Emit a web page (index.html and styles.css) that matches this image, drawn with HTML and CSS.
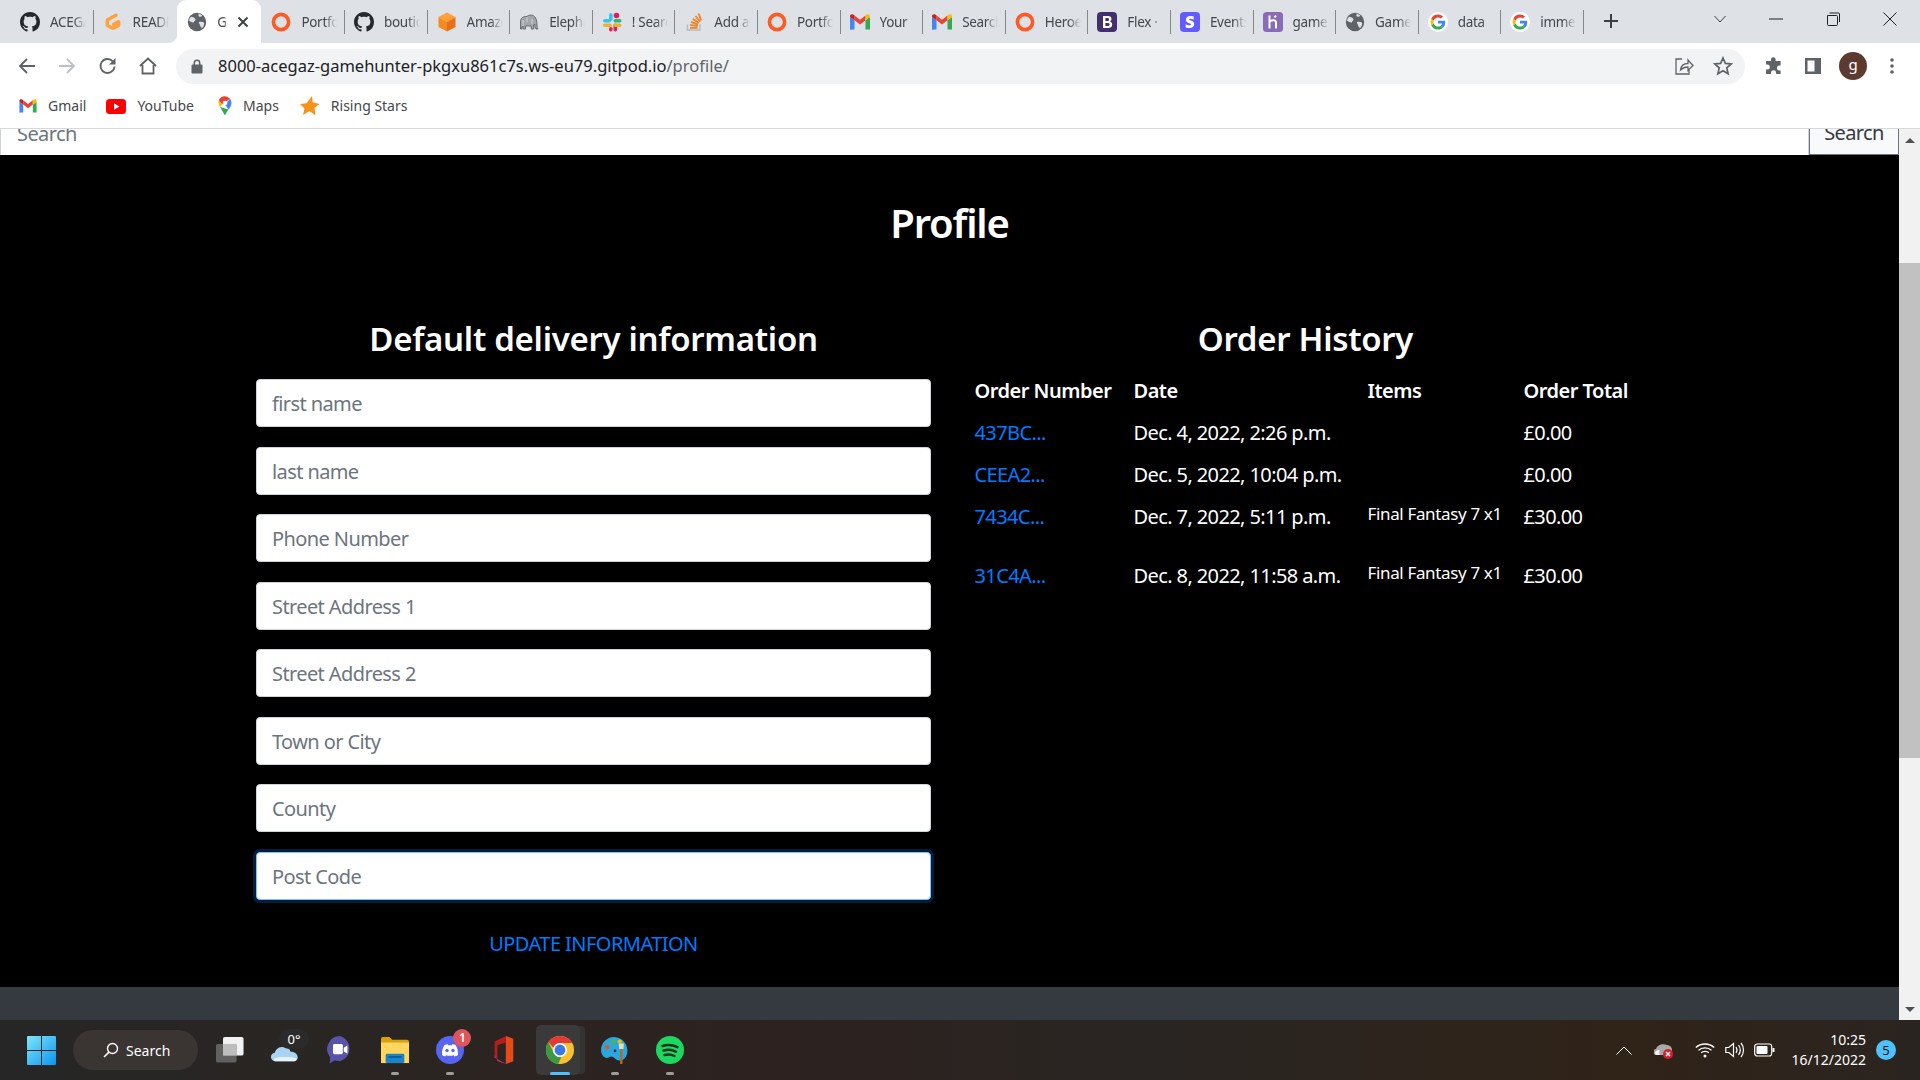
FILE: index.html
```html
<!DOCTYPE html>
<html lang="en">
<head>
    <meta charset="UTF-8">
    <meta name="viewport" content="width=device-width, initial-scale=1.0">
    <title>Profile</title>
    <link rel="stylesheet" href="styles.css">
</head>
<body>

    <!-- shared icons -->
    <svg class="icon-defs" width="0" height="0">
        <symbol id="i-github" viewBox="0 0 16 16"><path fill="#24292e" d="M8 0C3.58 0 0 3.58 0 8c0 3.54 2.29 6.53 5.47 7.59.4.07.55-.17.55-.38 0-.19-.01-.82-.01-1.49-2.01.37-2.53-.49-2.69-.94-.09-.23-.48-.94-.82-1.13-.28-.15-.68-.52-.01-.53.63-.01 1.08.58 1.23.82.72 1.21 1.87.87 2.33.66.07-.52.28-.87.51-1.07-1.78-.2-3.64-.89-3.64-3.95 0-.87.31-1.59.82-2.15-.08-.2-.36-1.02.08-2.12 0 0 .67-.21 2.2.82.64-.18 1.32-.27 2-.27.68 0 1.36.09 2 .27 1.53-1.04 2.2-.82 2.2-.82.44 1.1.16 1.92.08 2.12.51.56.82 1.27.82 2.15 0 3.07-1.87 3.75-3.65 3.95.29.25.54.73.54 1.48 0 1.07-.01 1.93-.01 2.2 0 .21.15.46.55.38A8.013 8.013 0 0016 8c0-4.42-3.58-8-8-8z"/></symbol>
        <symbol id="i-gitpod" viewBox="0 0 20 20"><path fill="none" stroke="#ffa23e" stroke-width="3.4" stroke-linecap="round" stroke-linejoin="round" d="M13 3.2 5 7.6a1.6 1.6 0 0 0-.8 1.4v3.4c0 .6.3 1.1.8 1.4l4.2 2.3c.5.3 1 .3 1.5 0l4.2-2.3c.5-.3.8-.8.8-1.4V9.6L10.5 12.4"/></symbol>
        <symbol id="i-globe" viewBox="0 0 20 20"><circle cx="10" cy="10" r="9.2" fill="#5f6368"/><path fill="#dee1e6" d="M4 4.8c1.6.2 3 .7 4 1.7.9.9.5 1.8-.4 2.4-.8.5-.5 1.5-1.4 1.6C5 10.600 3 9.500 1.800 8.500 2.200 7 3 5.800 4 4.800zM11.500 1.800c1.500.3 2.800 1 3.900 2-.7.900-1.700.900-2.600.900-1 0-1.500-.500-1.300-1.400zM12 10c1.500-.500 3.500-.300 5 .5.400 2-.4 4-1.800 5.500-1.500-.300-1.800-1.700-2.200-3-.3-1-1.600-2.300-1-3z"/></symbol>
        <symbol id="i-ring" viewBox="0 0 20 20"><circle cx="10" cy="10" r="7.600" fill="none" stroke="#ff5a24" stroke-width="3.600"/></symbol>
        <symbol id="i-cube" viewBox="0 0 20 20"><path fill="#ffa033" d="M10 .5 18.500 5 10 10 1.500 5z"/><path fill="#f58a1f" d="M1.500 5 10 10v9.500L1.500 15z"/><path fill="#e8701a" d="M18.500 5 10 10v9.500l8.500-4.500z"/></symbol>
        <symbol id="i-elephant" viewBox="0 0 20 20"><path fill="#a4a7aa" stroke="#55585c" stroke-width=".8" d="M1.500 17V9.500C1.500 6 4.500 4 8 4.500c1.500-1.800 5.500-2 7.500 0 1.800 1.700 2.500 5 2.500 8.500 0 1.500.2 3 .8 4h-1.800c-.8-1-1.200-3-1.300-5l-1 1v4h-2.500v-3H6.500v3H4v-3l-1 1v2z"/><path fill="none" stroke="#f1f3f4" stroke-width=".6" d="M8 5v5M4 8v6M13 7v5"/></symbol>
        <symbol id="i-slack" viewBox="0 0 20 20"><rect x="7" y="1" width="3.600" height="8" rx="1.800" fill="#36c5f0"/><rect x="1" y="7" width="8" height="3.600" rx="1.800" fill="#36c5f0"/><circle cx="14.500" cy="3.500" r="2.800" fill="#e01e5a"/><rect x="11.500" y="7" width="8" height="3.600" rx="1.800" fill="#2eb67d"/><rect x="11.500" y="11.500" width="3.600" height="8" rx="1.800" fill="#e01e5a"/><rect x="1" y="11.500" width="9" height="3.600" rx="1.800" fill="#ecb22e"/><rect x="11.500" y="11.500" width="8" height="3.600" rx="1.800" fill="#ecb22e"/><rect x="7" y="15" width="3.600" height="4.500" rx="1.800" fill="#e01e5a"/></symbol>
        <symbol id="i-stack" viewBox="0 0 20 20"><path fill="none" stroke="#bcbbbb" stroke-width="1.600" d="M3.500 12.500v5.500h12.500v-5.500"/><path fill="none" stroke="#f48024" stroke-width="1.800" d="M6 15.800h7.500M6.200 12.800l7.400 1.300M7 9.800l7 2.900M8.800 6.800l6 4.300M11.500 4l4.600 5.700M14.500 1.500l2.800 6.800"/></symbol>
        <symbol id="i-gmail" viewBox="0 0 20 16"><path fill="#4285f4" d="M0 15.500V3l4.500 3.300v9.200H1.400A1.400 1.400 0 0 1 0 15.500z"/><path fill="#34a853" d="M15.500 15.500V6.300L20 3v12.500h-4.500z"/><path fill="#ea4335" d="M4.500 6.300V1.500L10 5.700l5.500-4.200v4.800L10 10.500z"/><path fill="#c5221f" d="M0 3V2.200C0 .4 2-.4 3.300.6L4.500 1.500v4.800z"/><path fill="#fbbc04" d="M20 3V2.200C20 .4 18-.4 16.700.6l-1.200.9v4.800z"/></symbol>
        <symbol id="i-bootstrap" viewBox="0 0 20 20"><rect width="20" height="20" rx="4" fill="#41306b"/><path fill="#fff" d="M6 4h5c2.200 0 3.500 1.200 3.500 3 0 1.200-.7 2.200-1.800 2.500v.1c1.500.2 2.500 1.300 2.500 2.800 0 2.200-1.600 3.600-4.200 3.600H6zm2.400 2v3h1.900c1.200 0 1.800-.5 1.800-1.500S11.500 6 10.400 6zm0 5v3h2.200c1.300 0 2-.5 2-1.500s-.7-1.500-2.100-1.500z"/></symbol>
        <symbol id="i-stripe" viewBox="0 0 20 20"><rect width="20" height="20" rx="4" fill="#635bff"/><path fill="#fff" d="M9.200 7.600c0-.6.500-.8 1.200-.8 1 0 2.300.3 3.300.9V4.600a8.700 8.700 0 0 0-3.300-.6C7.700 4 5.900 5.400 5.900 7.800c0 3.700 5 3.100 5 4.700 0 .7-.6.900-1.400.9-1.200 0-2.700-.5-3.900-1.200v3.100c1.300.6 2.600.8 3.900.8 2.800 0 4.700-1.400 4.700-3.800 0-4-5-3.300-5-4.700z"/></symbol>
        <symbol id="i-heroku" viewBox="0 0 20 20"><rect width="20" height="20" rx="3.500" fill="#8a6cb6"/><path fill="none" stroke="#fff" stroke-width="2" d="M6.500 3.500v13M6.500 9.500c2-1.200 6-2 6.500.5v6.500M13 3.500l-1.500 2"/></symbol>
        <symbol id="i-google" viewBox="0 0 20 20"><circle cx="10" cy="10" r="10" fill="#fff"/><path fill="#4285f4" d="M17.200 10.200c0-.6 0-1-.1-1.500H10v2.900h4.100a3.500 3.500 0 0 1-1.500 2.300l2.300 1.800c1.400-1.300 2.300-3.200 2.300-5.500z"/><path fill="#34a853" d="M10 17.500c2 0 3.700-.7 4.900-1.800l-2.300-1.800c-.7.400-1.500.7-2.600.7-2 0-3.700-1.300-4.300-3.200l-2.400 1.800a7.400 7.400 0 0 0 6.700 4.300z"/><path fill="#fbbc05" d="M5.700 11.400a4.500 4.500 0 0 1 0-2.900L3.300 6.700a7.400 7.400 0 0 0 0 6.600z"/><path fill="#ea4335" d="M10 5.400c1.100 0 2.100.4 2.900 1.100l2.100-2.100A7.200 7.200 0 0 0 10 2.500a7.400 7.400 0 0 0-6.700 4.200l2.400 1.800C6.300 6.700 8 5.400 10 5.400z"/></symbol>
        <symbol id="i-close" viewBox="0 0 12 12"><path stroke="#3c4043" stroke-width="1.900" d="M1.500 1.500l9 9M10.500 1.500l-9 9"/></symbol>
    </svg>

    <div class="browser">
        <div class="tabstrip">
            <div class="tab"><svg class="favicon"><use href="#i-github"/></svg><span class="tab-label">ACEGAZ</span></div>
            <div class="tab no-sep"><svg class="favicon"><use href="#i-gitpod"/></svg><span class="tab-label">README</span></div>
            <div class="tab tab-active no-sep"><svg class="favicon"><use href="#i-globe"/></svg><span class="tab-label tab-label-short">Game</span><svg class="tab-close"><use href="#i-close"/></svg></div>
            <div class="tab"><svg class="favicon"><use href="#i-ring"/></svg><span class="tab-label">Portfolio</span></div>
            <div class="tab"><svg class="favicon"><use href="#i-github"/></svg><span class="tab-label">boutique</span></div>
            <div class="tab"><svg class="favicon"><use href="#i-cube"/></svg><span class="tab-label">Amazon</span></div>
            <div class="tab"><svg class="favicon"><use href="#i-elephant"/></svg><span class="tab-label">Elephant</span></div>
            <div class="tab"><svg class="favicon"><use href="#i-slack"/></svg><span class="tab-label">! Search</span></div>
            <div class="tab"><svg class="favicon"><use href="#i-stack"/></svg><span class="tab-label">Add a</span></div>
            <div class="tab"><svg class="favicon"><use href="#i-ring"/></svg><span class="tab-label">Portfolio</span></div>
            <div class="tab"><svg class="favicon"><use href="#i-gmail"/></svg><span class="tab-label">Your</span></div>
            <div class="tab"><svg class="favicon"><use href="#i-gmail"/></svg><span class="tab-label">Search</span></div>
            <div class="tab"><svg class="favicon"><use href="#i-ring"/></svg><span class="tab-label">Heroes</span></div>
            <div class="tab"><svg class="favicon"><use href="#i-bootstrap"/></svg><span class="tab-label">Flex ·</span></div>
            <div class="tab"><svg class="favicon"><use href="#i-stripe"/></svg><span class="tab-label">Events</span></div>
            <div class="tab"><svg class="favicon"><use href="#i-heroku"/></svg><span class="tab-label">game</span></div>
            <div class="tab"><svg class="favicon"><use href="#i-globe"/></svg><span class="tab-label">Game</span></div>
            <div class="tab"><svg class="favicon"><use href="#i-google"/></svg><span class="tab-label">data</span></div>
            <div class="tab"><svg class="favicon"><use href="#i-google"/></svg><span class="tab-label">immer</span></div>
            <svg class="new-tab" viewBox="0 0 16 16"><path stroke="#3c4043" stroke-width="2" d="M8 1v14M1 8h14"/></svg>
            <svg class="tab-search" viewBox="0 0 12 8"><path fill="none" stroke="#3c4043" d="M.5 1 6 7l5.500-6"/></svg>
            <div class="window-controls">
                <svg viewBox="0 0 14 14"><path stroke="#202124" d="M0 7h14"/></svg>
                <svg viewBox="0 0 14 14"><path fill="none" stroke="#202124" d="M1.500 3.500h9a1 1 0 0 1 1 1v8a1 1 0 0 1-1 1h-8a1 1 0 0 1-1-1zM3.500 1h9a1 1 0 0 1 1 1v8"/></svg>
                <svg viewBox="0 0 14 14"><path stroke="#202124" d="M.5.5l13 13M13.500.5l-13 13"/></svg>
            </div>
        </div>

        <div class="toolbar">
            <svg class="tool-icon" viewBox="0 0 20 20"><path fill="none" stroke="#5f6368" stroke-width="1.800" d="M18 10H3M10 3l-7 7 7 7"/></svg>
            <svg class="tool-icon" viewBox="0 0 20 20"><path fill="none" stroke="#bdc1c6" stroke-width="1.800" d="M2 10h15M10 3l7 7-7 7"/></svg>
            <svg class="tool-icon" viewBox="0 0 20 20"><path fill="none" stroke="#5f6368" stroke-width="1.800" d="M16.500 10.500a7 7 0 1 1-1.700-5.100"/><path fill="#5f6368" d="M17.500 2v6.500H11z"/></svg>
            <svg class="tool-icon" viewBox="0 0 20 20"><path fill="none" stroke="#5f6368" stroke-width="1.800" d="M2 10 10 2.500 18 10M4.500 9v8.500h11V9"/></svg>
            <div class="omnibox">
                <svg class="lock" viewBox="0 0 12 15"><path fill="#5f6368" d="M1.500 5.500h9A1 1 0 0 1 11.500 6.500v7a1 1 0 0 1-1 1h-9a1 1 0 0 1-1-1v-7a1 1 0 0 1 1-1z"/><path fill="none" stroke="#5f6368" stroke-width="1.500" d="M3.300 6V4a2.700 2.700 0 0 1 5.400 0v2"/></svg>
                <span class="url">8000-acegaz-gamehunter-pkgxu861c7s.ws-eu79.gitpod.io<span class="url-path">/profile/</span></span>
                <svg class="omni-share" viewBox="0 0 20 20"><path fill="none" stroke="#5f6368" stroke-width="1.300" d="M8 3H2v15h13v-4M6.500 14c.5-4 3.500-6.500 7.500-6.500V4l5 5.500-5 5V11c-3 0-5.500 1-7.500 3z"/></svg>
                <svg class="omni-star" viewBox="0 0 20 20"><path fill="none" stroke="#5f6368" stroke-width="1.700" d="M10 2l2.400 5.400 5.800.6-4.400 3.900 1.300 5.800L10 14.700l-5.100 3 1.300-5.800L1.800 8l5.800-.6z"/></svg>
            </div>
            <svg class="ext-icon" viewBox="0 0 20 20"><path fill="#5f6368" d="M7 3.500a2.300 2.300 0 0 1 4.600 0V5h5v4.500h-1.200a2.500 2.500 0 0 0 0 5h1.200V18h-4.500v-1.200a2.500 2.500 0 0 0-5 0V18H2v-4.500h1.300a2.500 2.500 0 0 0 0-5H2V5h5z"/></svg>
            <svg class="ext-icon" viewBox="0 0 20 20"><path fill="#5f6368" d="M2 2h16v16H2zm2.500 2.500v11h7v-11z"/></svg>
            <span class="avatar">g</span>
            <svg class="dots" viewBox="0 0 4 18"><circle cx="2" cy="3" r="1.800" fill="#5f6368"/><circle cx="2" cy="9" r="1.800" fill="#5f6368"/><circle cx="2" cy="15" r="1.800" fill="#5f6368"/></svg>
        </div>

        <div class="bookmarks">
            <a class="bookmark"><svg viewBox="0 0 20 16" class="bm-gmail"><use href="#i-gmail"/></svg>Gmail</a>
            <a class="bookmark"><svg viewBox="0 0 20 15" class="bm-youtube"><rect width="20" height="15" rx="3.500" fill="#f00"/><path fill="#fff" d="M8 4.300v6.400l5.400-3.200z"/></svg>YouTube</a>
            <a class="bookmark"><svg viewBox="0 0 14 20" class="bm-maps"><path fill="#34a853" d="M2 11l5 8.500c.8-2.200 2.200-4 3.600-6z"/><path fill="#fbbc04" d="M.8 4.300C.2 7 .7 9 2 11l5-5.800z"/><path fill="#4285f4" d="M13.500 7c0-1.600-.6-3-1.500-4.200L7 8.500 10.600 13.500c1.500-2 2.900-3.800 2.900-6.500z"/><path fill="#ea4335" d="M12 2.800A6.500 6.500 0 0 0 .8 4.300L4.500 8.300z"/><circle cx="7" cy="7" r="2.300" fill="#fff"/></svg>Maps</a>
            <a class="bookmark"><svg viewBox="0 0 20 20" class="bm-star"><path fill="#f7931a" d="M12 0l.7 6.300L19.500 8l-5 3.800 1 7.700-6-4.500L3 19l1.500-6.500L0 8l6.500-.8z"/></svg>Rising Stars</a>
        </div>

        <div class="viewport">
            <div class="page">
                <div class="search-bar">
                    <input class="search-input" type="text" placeholder="Search">
                    <button class="search-button" type="button">Search</button>
                </div>

                <main class="profile">
                    <h1>Profile</h1>
                    <div class="profile-columns">
                        <section class="delivery">
                            <h2>Default delivery information</h2>
                            <form class="delivery-form">
                                <input type="text" placeholder="first name">
                                <input type="text" placeholder="last name">
                                <input type="text" placeholder="Phone Number">
                                <input type="text" placeholder="Street Address 1">
                                <input type="text" placeholder="Street Address 2">
                                <input type="text" placeholder="Town or City">
                                <input type="text" placeholder="County">
                                <input class="is-focused" type="text" placeholder="Post Code">
                                <a class="update-link">UPDATE INFORMATION</a>
                            </form>
                        </section>

                        <section class="orders">
                            <h2>Order History</h2>
                            <table>
                                <thead>
                                    <tr><th class="col-number">Order Number</th><th class="col-date">Date</th><th class="col-items">Items</th><th>Order Total</th></tr>
                                </thead>
                                <tbody>
                                    <tr><td><a>437BC...</a></td><td>Dec. 4, 2022, 2:26 p.m.</td><td></td><td>£0.00</td></tr>
                                    <tr><td><a>CEEA2...</a></td><td>Dec. 5, 2022, 10:04 p.m.</td><td></td><td>£0.00</td></tr>
                                    <tr><td><a>7434C...</a></td><td>Dec. 7, 2022, 5:11 p.m.</td><td><p class="item-line">Final Fantasy 7 x1</p></td><td>£30.00</td></tr>
                                    <tr><td><a>31C4A...</a></td><td>Dec. 8, 2022, 11:58 a.m.</td><td><p class="item-line">Final Fantasy 7 x1</p></td><td>£30.00</td></tr>
                                </tbody>
                            </table>
                        </section>
                    </div>
                </main>

                <footer class="page-footer"></footer>
            </div>

            <div class="scrollbar">
                <span class="arrow-up"></span>
                <div class="scroll-track"><div class="scroll-thumb"></div></div>
                <span class="arrow-down"></span>
            </div>
        </div>
    </div>

    <div class="taskbar">
        <svg class="win-logo" viewBox="0 0 29 29"><defs><linearGradient id="win" x1="0" y1="0" x2="1" y2="1"><stop offset="0" stop-color="#7fe6fb"/><stop offset="1" stop-color="#0c94f0"/></linearGradient></defs><path fill="url(#win)" d="M0 1a1 1 0 0 1 1-1h13v14H0zM15 0h13a1 1 0 0 1 1 1v13H15zM0 15h14v14H1a1 1 0 0 1-1-1zM15 15h14v13a1 1 0 0 1-1 1H15z"/></svg>
        <div class="task-search">
            <svg viewBox="0 0 16 16"><circle cx="9.500" cy="6.500" r="5" fill="none" stroke="#fff" stroke-width="1.400"/><path stroke="#fff" stroke-width="1.600" d="M6 10.200 1 15"/></svg>
            <span>Search</span>
        </div>
        <div class="task-apps">
            <div class="task-app"><svg viewBox="0 0 30 28"><rect x="7.500" y="0" width="22" height="20" rx="2" fill="#f2f2f2"/><rect x="0" y="7.500" width="22" height="20" rx="2" fill="#6c6c6c" fill-opacity=".85"/><rect x="7.500" y="7.500" width="14.500" height="12.500" fill="#bdbdbd"/></svg></div>
            <div class="task-app"><svg viewBox="0 0 30 28"><path fill="#a9d3f2" d="M5 26a4.500 4.500 0 0 1-1-9C5 14 8 10 13 11c3-1 7 1 8 5 4 0 7 2 7.500 5 .5 3-1.500 5-4 5z"/><path fill="#e6f3fb" d="M3 23c6-2 18-2 25 0-1 2-2 3-4 3H5c-1 0-2-1-2-3z"/></svg><span class="weather-temp">0°</span></div>
            <div class="task-app"><svg viewBox="0 0 28 30"><path fill="#5a54a8" d="M14 0a14 14 0 0 1 0 27c-2 0-4-.4-5.500-1L3 29.500 3.500 23A14 14 0 0 1 14 0z"/><rect x="6.500" y="8.500" width="10.500" height="11" rx="1.500" fill="#fff"/><path fill="#fff" d="M18 12.500l4-2.500v9l-4-2.500z"/></svg></div>
            <div class="task-app"><svg viewBox="0 0 30 28"><path fill="#d9a20c" d="M0 2a2 2 0 0 1 2-2h7l3 3h16a2 2 0 0 1 2 2v6H0z"/><path fill="#ffd75e" d="M0 6h30v22H0z"/><rect x="5" y="18" width="20" height="10" rx="1.500" fill="#1a86c9"/><rect x="8" y="20.500" width="14" height="2" fill="#0c5e97"/></svg><span class="app-dot"></span></div>
            <div class="task-app"><svg viewBox="0 0 28 28"><circle cx="14" cy="14" r="14" fill="#5865f2"/><path fill="#fff" d="M6 19c-.3-4 .8-7.500 2.500-10 2-.8 3-.8 3.500-.5l.5 1c1-.2 2-.2 3 0l.5-1c.5-.3 1.500-.3 3.500.5 1.700 2.500 2.800 6 2.500 10-1.500 1-2.500 1.300-3.500 1.500l-.8-1.300c-2.500.7-5 .7-7.700 0l-.8 1.300C8.500 20.300 7.500 20 6 19z"/><circle cx="11" cy="14.500" r="1.700" fill="#5865f2"/><circle cx="17" cy="14.500" r="1.700" fill="#5865f2"/></svg><span class="discord-badge">1</span><span class="app-dot"></span></div>
            <div class="task-app task-app-office"><svg viewBox="0 0 24 30"><path fill="#e64a19" d="M15 0l8 3v24l-8 3z"/><path fill="#b71c1c" d="M15 0 3 6v17l12 7-9-3V10l9-3z"/><path fill="#a24067" d="M3 20l3 6.500 9 3.500-12-7z"/></svg></div>
            <div class="task-app task-app-active"><svg viewBox="0 0 30 30"><circle cx="15" cy="15" r="15" fill="#fbc02d"/><path fill="#e53935" d="M15 0a15 15 0 0 1 13 7.500H15a7.500 7.500 0 0 0-7 5L2.500 6.500A15 15 0 0 1 15 0z"/><path fill="#3a9a43" d="M2.500 6.500 8.500 18.500a7.500 7.500 0 0 0 8 4L13 30A15 15 0 0 1 2.500 6.500z"/><circle cx="15" cy="15" r="7.500" fill="#fff"/><circle cx="15" cy="15" r="5.800" fill="#3b78e7"/></svg><span class="app-dot app-dot-active"></span></div>
            <div class="task-app"><svg viewBox="0 0 30 30"><path fill="#29a8e0" d="M14 1C6 1 0 8 0 15c0 6 5 10 8 8 3-2 5-1 8 2 4 3 10 1 12-6 2-9-5-18-14-18z"/><circle cx="6.500" cy="12" r="2.500" fill="#e2572b"/><circle cx="13" cy="6" r="2.300" fill="#5cb531"/><circle cx="20" cy="6" r="2.300" fill="#f5b800"/><circle cx="15" cy="16" r="1.500" fill="#12334a"/><path fill="#b56a24" d="M20.500 14h2.500v16h-2.500z"/><path fill="#eadbb5" d="M19 8h5.500l-.5 6h-4.500z"/></svg><span class="app-dot"></span></div>
            <div class="task-app"><svg viewBox="0 0 28 28"><circle cx="14" cy="14" r="14" fill="#1ed760"/><path fill="none" stroke="#12331f" stroke-width="2.400" stroke-linecap="round" d="M6.500 10c5-1.500 10.500-1 15 1.200M7.500 14.500c4.300-1.200 9-.8 12.500 1.200M8.500 19c3.500-.9 7-.6 10 1"/></svg><span class="app-dot"></span></div>
        </div>
        <div class="tray">
            <svg class="tray-chevron" viewBox="0 0 16 9"><path fill="none" stroke="#fff" stroke-width="1" d="M.5 8.500 8 1l7.500 7.500"/></svg>
            <svg class="tray-cloud" viewBox="0 0 20 18"><path fill="#a8a8a8" d="M3 14a3 3 0 0 1-1-6c1-4 7-6 11-4 3 .5 5 2 5 5 0 3-2 5-5 5z"/><path fill="#f3f3f3" d="M1 12c0-2 2-3 5-3-1 2-1 4 0 5H3c-1 0-2-1-2-2z"/><circle cx="14" cy="13" r="5" fill="#d81f2f"/><path stroke="#fff" stroke-width="1.300" d="M12 11l4 4M16 11l-4 4"/></svg>
            <svg class="tray-wifi" viewBox="0 0 20 16"><path fill="none" stroke="#fff" stroke-width="1.300" d="M.8 5.500c5-4.700 13.400-4.700 18.400 0M3.500 8.200c3.500-3.200 9.500-3.200 13 0M6.200 10.800c2-1.800 5.600-1.800 7.600 0"/><circle cx="10" cy="14" r="1.500" fill="#fff"/></svg>
            <svg class="tray-sound" viewBox="0 0 20 16"><path fill="none" stroke="#fff" stroke-width="1.200" d="M.8 5.500h3L8.500 1.500v13L3.800 10.500h-3zM11 5c1.200 1.800 1.200 4.200 0 6M13.500 3c2.200 3 2.200 7 0 10M16 1c3.300 4 3.300 10 0 14"/></svg>
            <svg class="tray-battery" viewBox="0 0 21 14"><rect x=".7" y="1" width="17" height="12" rx="2.500" fill="none" stroke="#fff" stroke-width="1.200"/><rect x="2.500" y="3" width="11" height="8" rx="1" fill="#fff"/><rect x="18.500" y="5" width="2" height="4" fill="#fff"/></svg>
            <div class="clock"><span>10:25</span><span>16/12/2022</span></div>
            <span class="notify-badge">5</span>
        </div>
    </div>

</body>
</html>
```
FILE: styles.css
```css
* {
    box-sizing: border-box;
}
html, body {
    margin: 0;
    height: 100%;
    overflow: hidden;
}
body {
    width: 1920px;
    height: 1080px;
    display: flex;
    flex-direction: column;
    font-family: "Noto Sans", "Open Sans", sans-serif;
    background: #000;
}
.icon-defs {
    position: absolute;
}
.browser {
    height: 1020px;
    display: flex;
    flex-direction: column;
}

/* tab strip */
.tabstrip {
    height: 43px;
    flex: none;
    display: flex;
    padding-left: 11px;
    background: #dee1e6;
    color: #45474a;
    font-size: 13.5px;
    letter-spacing: -.3px;
}
.tab {
    position: relative;
    width: 82.6px;
    flex: none;
    display: flex;
    align-items: center;
    padding-left: 9px;
}
.tab::after {
    content: "";
    position: absolute;
    right: 0;
    top: 10px;
    height: 24px;
    width: 1px;
    background: #85888c;
}
.tab.no-sep::after {
    display: none;
}
.favicon {
    width: 20px;
    height: 20px;
    flex: none;
}
.tab-label {
    margin-left: 10px;
    width: 36px;
    overflow: hidden;
    white-space: nowrap;
    -webkit-mask-image: linear-gradient(90deg, #000 65%, transparent);
    mask-image: linear-gradient(90deg, #000 65%, transparent);
}
.tab-label-short {
    width: 11px;
}
.tab-active {
    background: #fff;
    border-radius: 9px 9px 0 0;
    margin: 0 1.2px 0 1px;
    width: 84px;
    padding-left: 10px;
}
.tab-active::before,
.tab-active::after {
    content: "";
    display: block;
    position: absolute;
    bottom: 0;
    top: auto;
    width: 9px;
    height: 9px;
    background: radial-gradient(circle at 0 0, transparent 9px, #fff 9.5px);
}
.tab-active::before {
    left: -9px;
}
.tab-active::after {
    right: -9px;
    background: radial-gradient(circle at 100% 0, transparent 9px, #fff 9.5px);
}
.tab-close {
    width: 12px;
    height: 12px;
    margin-left: 9px;
    flex: none;
}
.new-tab {
    width: 16px;
    height: 16px;
    margin: 13px 0 0 19px;
    flex: none;
}
.tab-search {
    width: 12px;
    height: 8px;
    margin: 15px 0 0 95px;
    flex: none;
}
.window-controls {
    display: flex;
    margin-left: 43px;
    gap: 43px;
    padding-top: 12px;
}
.window-controls svg {
    width: 14px;
    height: 14px;
}

/* toolbar */
.toolbar {
    height: 46px;
    flex: none;
    display: flex;
    align-items: center;
    background: #fff;
    padding-left: 17px;
}
.tool-icon {
    width: 20px;
    height: 20px;
    flex: none;
    margin-right: 20px;
}
.tool-icon:nth-child(2) {
    margin-right: 21px;
}
.tool-icon:nth-child(4) {
    margin-right: 0;
}
.omnibox {
    width: 1569px;
    height: 35px;
    margin-left: 18px;
    display: flex;
    align-items: center;
    padding: 0 0 0 15px;
    border-radius: 18px;
    background: #f1f3f4;
}
.lock {
    width: 12px;
    height: 15px;
    flex: none;
}
.url {
    margin: 0 0 2px 15px;
    font-size: 16.5px;
    color: #202124;
    white-space: nowrap;
}
.url-path {
    color: #5f6368;
}
.omni-share {
    width: 20px;
    height: 20px;
    margin-left: auto;
}
.omni-star {
    width: 20px;
    height: 20px;
    margin: 0 12px 0 19px;
}
.ext-icon {
    width: 20px;
    height: 20px;
    flex: none;
    margin-left: 19px;
}
.avatar {
    width: 28px;
    height: 28px;
    margin-left: 16px;
    border-radius: 50%;
    background: #5d3a2f;
    color: #fff;
    font-size: 15px;
    line-height: 24px;
    text-align: center;
}
.dots {
    width: 4px;
    height: 18px;
    margin-left: 23px;
}

/* bookmarks bar */
.bookmarks {
    height: 40px;
    flex: none;
    display: flex;
    align-items: flex-start;
    padding: 7px 0 0 19px;
    background: #fff;
    border-bottom: 1px solid #d7d8da;
    color: #45474a;
    font-size: 14px;
    line-height: 20px;
}
.bookmark {
    display: flex;
    align-items: center;
    margin-right: 20px;
}
.bookmark:nth-child(2) {
    margin-right: 24px;
}
.bookmark:nth-child(3) {
    margin-right: 21px;
}
.bookmark svg {
    margin-right: 11px;
    flex: none;
}
.bm-gmail {
    width: 18px;
    height: 14px;
}
.bm-youtube {
    width: 20px;
    height: 15px;
}
.bm-maps {
    width: 14px;
    height: 20px;
}
.bm-star {
    width: 20px;
    height: 20px;
}

/* page area */
.viewport {
    flex: 1;
    display: flex;
    min-height: 0;
}
.page {
    width: 1899px;
    display: flex;
    flex-direction: column;
}
.search-bar {
    height: 26px;
    flex: none;
    display: flex;
    align-items: flex-end;
    overflow: hidden;
    background: #fff;
}
.search-input {
    flex: 1;
    height: 44px;
    padding: 0 16px;
    border: 1px solid #ced4da;
    border-bottom: 0;
    font: inherit;
    font-size: 20px;
    letter-spacing: -.6px;
}
.search-input::placeholder,
.delivery-form input::placeholder {
    color: #6c757d;
    opacity: 1;
}
.search-button {
    width: 90px;
    height: 44px;
    flex: none;
    padding: 0;
    background: #f8f9fa;
    border: 1px solid #6c757d;
    border-top: 0;
    color: #343a40;
    font: inherit;
    font-size: 20px;
    letter-spacing: -.6px;
}
.profile {
    flex: 1;
    background: #000;
    color: #fff;
    padding-top: 44px;
}
h1 {
    margin: 0 0 73px;
    font-size: 40px;
    line-height: 48px;
    font-weight: 600;
    letter-spacing: -1.2px;
    text-align: center;
}
h2 {
    margin: 0;
    font-size: 33px;
    line-height: 38px;
    font-weight: 600;
    letter-spacing: -.3px;
    text-align: center;
}
.profile-columns {
    width: 1424px;
    margin: 0 auto;
    display: grid;
    grid-template-columns: 1fr 1fr;
}
.delivery {
    padding: 0 18.5px;
}
.delivery-form {
    margin-top: 21px;
    display: flex;
    flex-direction: column;
    gap: 19.5px;
}
.delivery-form input {
    height: 48px;
    padding: 1px 15px 0;
    background: #fff;
    border: 1px solid #ced4da;
    border-radius: 4px;
    color: #495057;
    font: inherit;
    font-size: 20px;
    letter-spacing: -.6px;
}
.delivery-form input.is-focused {
    border-color: #80bdff;
    box-shadow: 0 0 0 3px rgba(0, 123, 255, .25);
}
.update-link {
    margin-top: 10px;
    color: #007bff;
    font-size: 20px;
    letter-spacing: -.55px;
    line-height: 30px;
    text-align: center;
}
.orders {
    padding: 0 25px;
}
.orders table {
    margin-top: 12px;
    border-collapse: collapse;
    font-size: 20px;
    line-height: 26px;
    letter-spacing: -.6px;
}
.orders th {
    padding: 8px 0;
    font-weight: 600;
    letter-spacing: -.5px;
    text-align: left;
    white-space: nowrap;
}
.orders td {
    padding: 8px 0;
    vertical-align: top;
    white-space: nowrap;
}
.orders td a {
    color: #007bff;
}
.col-number {
    width: 159px;
}
.col-date {
    width: 234px;
}
.col-items {
    width: 156px;
}
.item-line {
    margin: -2px 0 21px;
    font-size: 17px;
    letter-spacing: -.35px;
    line-height: 24px;
}
.page-footer {
    height: 33px;
    flex: none;
    background: #343a40;
}

/* scrollbar */
.scrollbar {
    width: 21px;
    flex: none;
    display: flex;
    flex-direction: column;
    align-items: center;
    background: #f1f1f1;
}
.arrow-up,
.arrow-down {
    width: 0;
    height: 0;
    flex: none;
    border-left: 5px solid transparent;
    border-right: 5px solid transparent;
}
.arrow-up {
    margin-top: 9px;
    border-bottom: 5px solid #505050;
}
.arrow-down {
    margin-bottom: 8px;
    border-top: 5px solid #505050;
}
.scroll-track {
    flex: 1;
    width: 100%;
    padding-top: 120px;
}
.scroll-thumb {
    height: 495px;
    background: #c1c1c1;
}

/* windows taskbar */
.taskbar {
    height: 60px;
    flex: none;
    display: flex;
    align-items: center;
    padding-left: 27px;
    background: linear-gradient(90deg, #262626 0, #2a2522 20%, #2d2220 40%, #292522 60%, #302318 85%, #2a2420 100%);
    color: #fff;
}
.win-logo {
    width: 29px;
    height: 29px;
    flex: none;
}
.task-search {
    width: 125px;
    height: 40px;
    margin-left: 17px;
    display: flex;
    align-items: center;
    padding-left: 30px;
    gap: 7px;
    border-radius: 20px;
    background: #3a3533;
    font-size: 14px;
}
.task-search svg {
    width: 16px;
    height: 16px;
}
.task-apps {
    display: flex;
    margin-left: 4px;
}
.task-app {
    position: relative;
    width: 55.1px;
    height: 60px;
    display: flex;
    align-items: center;
    justify-content: center;
}
.task-app svg {
    width: 28px;
    height: 28px;
}
.task-app-office svg {
    margin-left: -4px;
}
.task-app-active::before {
    content: "";
    position: absolute;
    left: 3px;
    top: 5px;
    width: 44px;
    height: 50px;
    border-radius: 5px;
    background: #3a3a3a;
    box-shadow: 6px 0 0 -1px #333;
}
.task-app-active svg {
    position: relative;
}
.app-dot {
    position: absolute;
    left: 50%;
    bottom: 5px;
    width: 8px;
    height: 3px;
    margin-left: -4px;
    border-radius: 2px;
    background: #9d9d9d;
}
.app-dot-active {
    width: 20px;
    margin-left: -10px;
    background: #4cc2ff;
}
.weather-temp {
    position: absolute;
    left: 22px;
    top: 9px;
    width: 30px;
    height: 20px;
    border-radius: 10px;
    background: #2b2b2b;
    font-size: 13px;
    line-height: 20px;
    text-align: center;
}
.discord-badge {
    position: absolute;
    left: 31px;
    top: 9px;
    width: 18px;
    height: 18px;
    border-radius: 50%;
    background: #e0555b;
    font-size: 12px;
    font-weight: 600;
    line-height: 18px;
    text-align: center;
}
.tray {
    margin-left: auto;
    display: flex;
    align-items: center;
    padding-right: 24px;
}
.tray-chevron {
    width: 16px;
    height: 9px;
}
.tray-cloud {
    width: 20px;
    height: 18px;
    margin-left: 22px;
}
.tray-wifi {
    width: 20px;
    height: 16px;
    margin-left: 21px;
}
.tray-sound {
    width: 20px;
    height: 16px;
    margin-left: 10px;
}
.tray-battery {
    width: 21px;
    height: 14px;
    margin-left: 9px;
}
.clock {
    display: flex;
    flex-direction: column;
    align-items: flex-end;
    margin-left: 17px;
    font-size: 14px;
    line-height: 20px;
}
.notify-badge {
    width: 20px;
    height: 20px;
    margin-left: 10px;
    border-radius: 50%;
    background: #4cc2ff;
    color: #111;
    font-size: 13px;
    line-height: 20px;
    text-align: center;
}
```
